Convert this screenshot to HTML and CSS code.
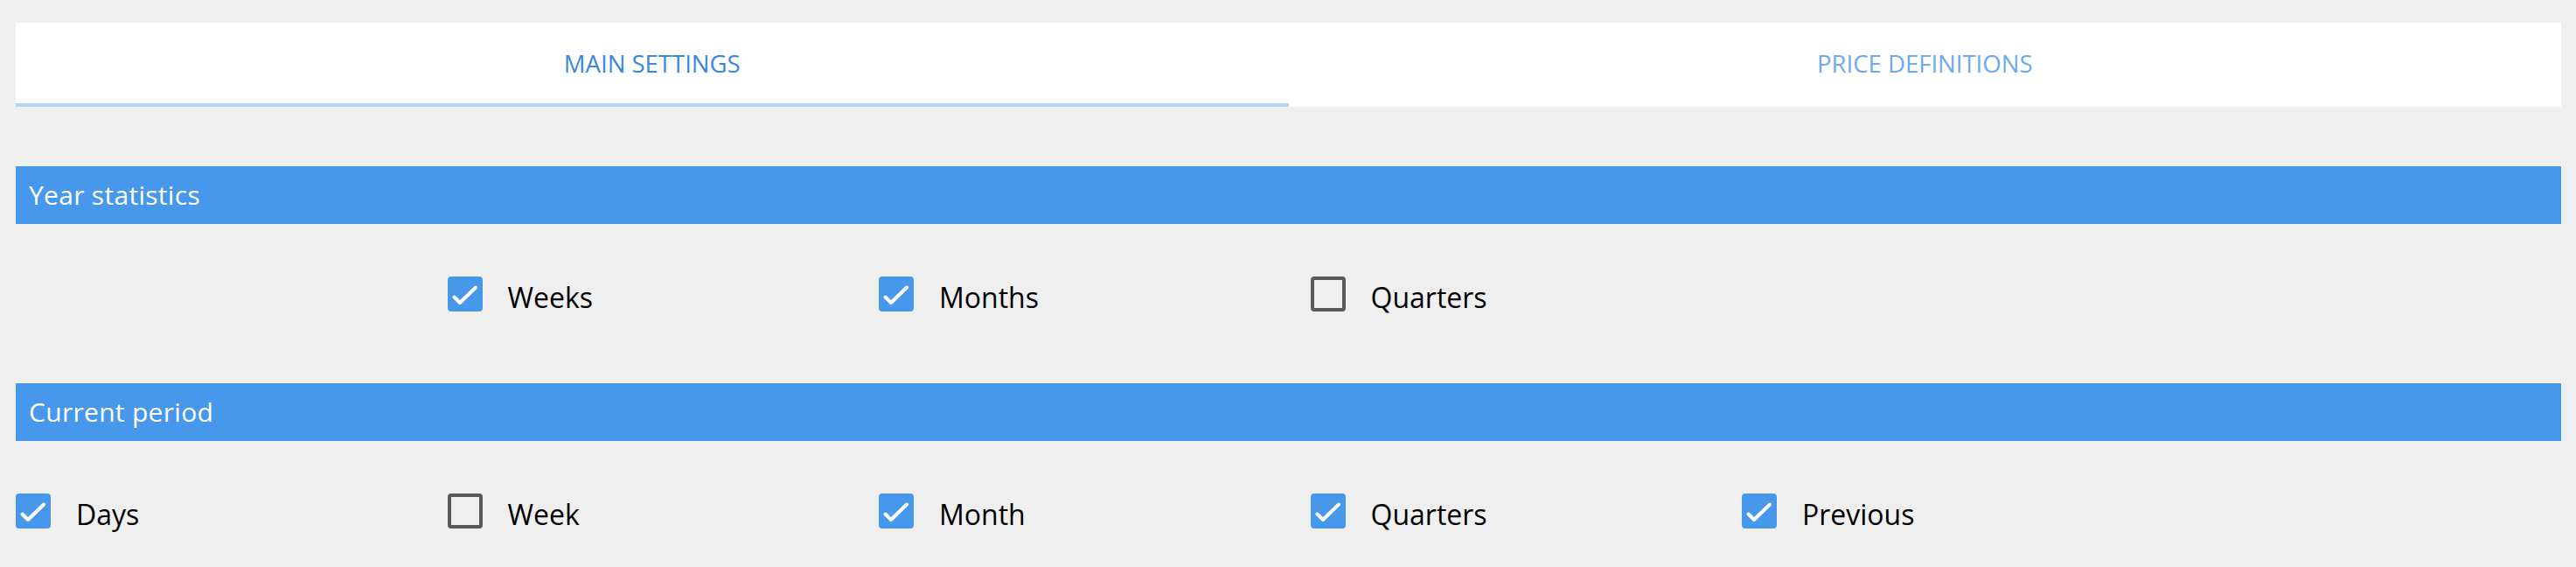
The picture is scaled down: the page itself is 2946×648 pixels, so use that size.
FILE: index.html
```html
<!DOCTYPE html>
<html lang="en">
<head>
<meta charset="utf-8">
<title>Settings</title>
<link rel="stylesheet" href="styles.css">
</head>
<body>
<div class="page">
  <nav class="tabs">
    <div class="tab tab-active">MAIN SETTINGS</div>
    <div class="tab">PRICE DEFINITIONS</div>
  </nav>

  <section class="section">
    <h2 class="section-title">Year statistics</h2>
    <div class="options">
      <label class="option col-2"><span class="box checked"><svg viewBox="0 0 40 40"><path d="M7.5 23.5 L14 30 L32 12.5"/></svg></span><span class="text">Weeks</span></label>
      <label class="option"><span class="box checked"><svg viewBox="0 0 40 40"><path d="M7.5 23.5 L14 30 L32 12.5"/></svg></span><span class="text">Months</span></label>
      <label class="option"><span class="box"></span><span class="text">Quarters</span></label>
    </div>
  </section>

  <section class="section">
    <h2 class="section-title">Current period</h2>
    <div class="options">
      <label class="option"><span class="box checked"><svg viewBox="0 0 40 40"><path d="M7.5 23.5 L14 30 L32 12.5"/></svg></span><span class="text">Days</span></label>
      <label class="option"><span class="box"></span><span class="text">Week</span></label>
      <label class="option"><span class="box checked"><svg viewBox="0 0 40 40"><path d="M7.5 23.5 L14 30 L32 12.5"/></svg></span><span class="text">Month</span></label>
      <label class="option"><span class="box checked"><svg viewBox="0 0 40 40"><path d="M7.5 23.5 L14 30 L32 12.5"/></svg></span><span class="text">Quarters</span></label>
      <label class="option"><span class="box checked"><svg viewBox="0 0 40 40"><path d="M7.5 23.5 L14 30 L32 12.5"/></svg></span><span class="text">Previous</span></label>
    </div>
  </section>
</div>
</body>
</html>
```

FILE: styles.css
```css
html, body {
  margin: 0;
  padding: 0;
  background: #efefef;
}

body {
  font-family: "Open Sans", "DejaVu Sans", sans-serif;
  color: #000000;
}

.page {
  padding: 26px 17px 0 18px;
}

.tabs {
  display: flex;
  background: #ffffff;
}

.tab {
  flex: 1 1 0;
  text-align: center;
  font-size: 27.5px;
  line-height: 90px;
  padding-top: 2px;
  color: #6fa9ee;
  border-bottom: 4px solid transparent;
}

.tab-active {
  color: #3a87e3;
  border-bottom-color: #b3d5f6;
}

.section {
  margin-top: 68px;
}

.section + .section {
  margin-top: 74px;
}

.section-title {
  margin: 0;
  height: 66px;
  line-height: 66px;
  padding-left: 15px;
  background: #4797eb;
  color: #ffffff;
  font-size: 30px;
  font-weight: normal;
  letter-spacing: 0.3px;
}

.options {
  display: grid;
  grid-template-columns: repeat(5, 493.5px) auto;
  padding-top: 60px;
}

.col-2 {
  grid-column-start: 2;
}

.option {
  display: flex;
  align-items: flex-start;
  gap: 29px;
}

.box {
  box-sizing: border-box;
  width: 40px;
  height: 40px;
  border: 4px solid #5a5a5a;
  border-radius: 4px;
  flex: none;
}

.box.checked {
  border: none;
  background: #4797eb;
}

.box svg {
  display: block;
  width: 40px;
  height: 40px;
}

.box svg path {
  fill: none;
  stroke: #ffffff;
  stroke-width: 4;
  stroke-linecap: round;
  stroke-linejoin: round;
}

.text {
  font-size: 32px;
  line-height: 48px;
}
```
